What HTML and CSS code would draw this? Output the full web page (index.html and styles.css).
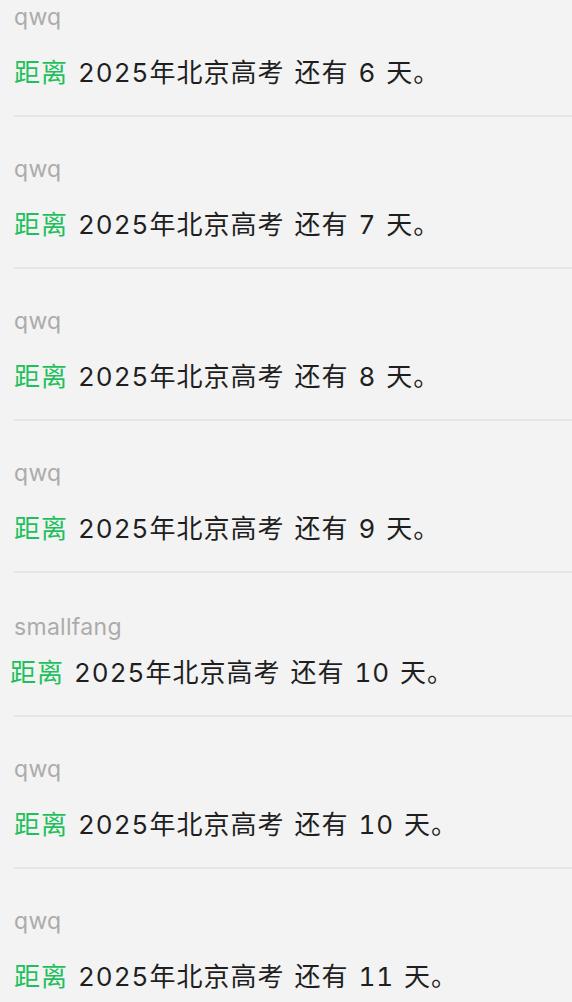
FILE: index.html
```html
<!DOCTYPE html>
<html lang="zh-CN">
<head>
<meta charset="utf-8">
<title>高考倒计时</title>
<link rel="stylesheet" href="styles.css">
</head>
<body>
<ul class="feed">
  <li class="post">
    <div class="author">qwq</div>
    <p class="msg"><span class="hl">距离</span> 2025年北京高考 还有 6 天。</p>
  </li>
  <li class="post">
    <div class="author">qwq</div>
    <p class="msg"><span class="hl">距离</span> 2025年北京高考 还有 7 天。</p>
  </li>
  <li class="post">
    <div class="author">qwq</div>
    <p class="msg"><span class="hl">距离</span> 2025年北京高考 还有 8 天。</p>
  </li>
  <li class="post">
    <div class="author">qwq</div>
    <p class="msg"><span class="hl">距离</span> 2025年北京高考 还有 9 天。</p>
  </li>
  <li class="post post-plain">
    <div class="author">smallfang</div>
    <div class="msg"><span class="hl">距离</span> 2025年北京高考 还有 10 天。</div>
  </li>
  <li class="post">
    <div class="author">qwq</div>
    <p class="msg"><span class="hl">距离</span> 2025年北京高考 还有 10 天。</p>
  </li>
  <li class="post">
    <div class="author">qwq</div>
    <p class="msg"><span class="hl">距离</span> 2025年北京高考 还有 11 天。</p>
  </li>
</ul>
</body>
</html>
```
FILE: styles.css
```css
html, body {
  margin: 0;
  padding: 0;
  background: #f3f3f3;
}
body {
  font-family: Inter, "Noto Sans CJK SC", sans-serif;
  overflow: hidden;
}
.feed {
  list-style: none;
  margin: -35px 0 0 14px;
  padding: 0;
}
.post {
  display: flex;
  flex-direction: column;
  padding: 37px 0 24px;
  border-bottom: 2px solid #e6e6e6;
}
.author {
  font-size: 23px;
  line-height: 30px;
  letter-spacing: 0.3px;
  color: #ababab;
}
.msg {
  margin: 23px 0 0;
  font-size: 26px;
  line-height: 36px;
  letter-spacing: 1px;
  word-spacing: 2px;
  font-variant-numeric: tabular-nums;
  color: #1f1f1f;
}
.hl {
  color: #1ec05c;
}
.post-plain {
  padding-top: 39px;
}
.post-plain .msg {
  margin: 13px 0 0 -4px;
}
```
